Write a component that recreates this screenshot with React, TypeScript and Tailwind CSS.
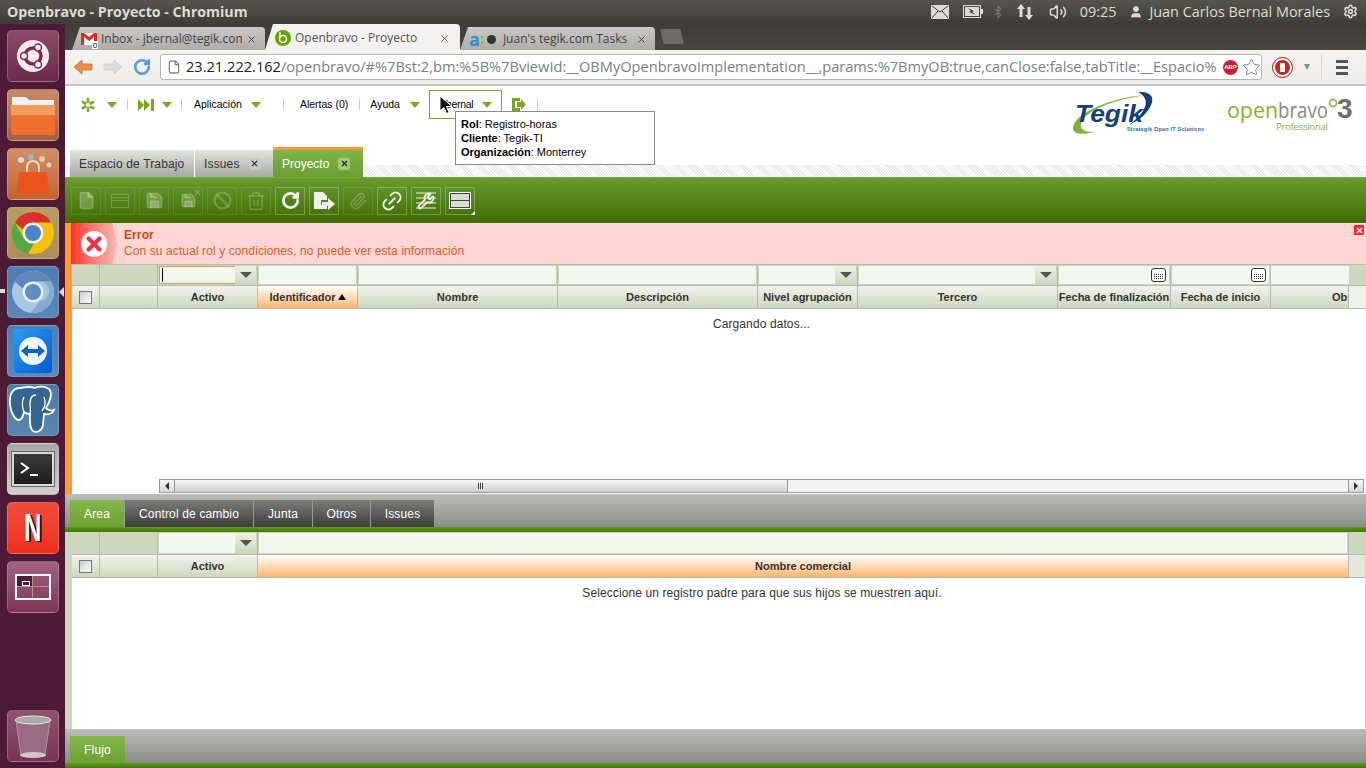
import { ReactNode } from "react";
import { Ban, Bluetooth, File, Link2, Paperclip, RotateCw, Save, Settings, Star, Trash2, User, Volume2, Wrench, X } from "lucide-react";

const arial = { fontFamily: '"Liberation Sans", Arial, sans-serif' };
const ui = { fontFamily: '"Open Sans", "Noto Sans", sans-serif' };

function DockTile({ className, children }: { className: string; children: ReactNode }) {
    return (
        <div className={`w-[52px] h-[52px] rounded-[5px] border border-white/20 flex items-center justify-center overflow-hidden shrink-0 ${className}`}>
            {children}
        </div>
    );
}

function Launcher() {
    return (
        <div className="w-[65px] shrink-0 bg-[#4d1b35] flex flex-col items-center gap-[7px] pt-[6px] pb-[6px] relative">
            <DockTile className="bg-gradient-to-b from-[#8b4a68] to-[#6d2a4b]">
                <svg width="36" height="36" viewBox="0 0 36 36">
                    <circle cx="18" cy="18" r="16" fill="#f3e9ee" />
                    <circle cx="18" cy="18" r="8" fill="none" stroke="#76304f" strokeWidth="3.5" />
                    <circle cx="9" cy="18" r="3.5" fill="#f3e9ee" stroke="#76304f" strokeWidth="1.5" />
                    <circle cx="23" cy="9.5" r="3.5" fill="#f3e9ee" stroke="#76304f" strokeWidth="1.5" />
                    <circle cx="23" cy="26.5" r="3.5" fill="#f3e9ee" stroke="#76304f" strokeWidth="1.5" />
                </svg>
            </DockTile>
            <DockTile className="bg-gradient-to-b from-[#c78a68] to-[#a8603c]">
                <svg width="46" height="44" viewBox="0 0 46 44">
                    <path d="M2 4h14l3 3h25v8H2z" fill="#f4f1ec" />
                    <path d="M1 12h44v28a2 2 0 0 1-2 2H3a2 2 0 0 1-2-2z" fill="#ee6f2e" />
                    <path d="M1 12h44v10H1z" fill="#f79a5e" />
                </svg>
            </DockTile>
            <DockTile className="bg-gradient-to-b from-[#cf8f66] to-[#c4612f]">
                <svg width="44" height="44" viewBox="0 0 44 44">
                    <circle cx="10" cy="8" r="3" fill="#e8d9c8" />
                    <circle cx="20" cy="5" r="3" fill="#9fb7cc" />
                    <circle cx="31" cy="7" r="3" fill="#e6c9a0" />
                    <circle cx="38" cy="13" r="2.5" fill="#d8d0c8" />
                    <path d="M8 20h28l2 22H6z" fill="#e8541c" />
                    <path d="M16 20v-5a6 6 0 0 1 12 0v5" fill="none" stroke="#f4d9c4" strokeWidth="2" />
                </svg>
            </DockTile>
            <DockTile className="bg-gradient-to-b from-[#b79c67] to-[#ab8f58]">
                <svg width="44" height="44" viewBox="0 0 44 44">
                    <circle cx="22" cy="22" r="21" fill="#f4c20d" />
                    <path d="M22 1a21 21 0 0 1 18.2 10.5H22a10.5 10.5 0 0 0-10 7.3L3.8 11.5A21 21 0 0 1 22 1z" fill="#d9302a" />
                    <path d="M3.800 11.500L14 29a10 10 0 0 0 9 3.400L17 43A21 21 0 0 1 3.800 11.500z" fill="#54a845" />
                    <circle cx="22" cy="22" r="10.500" fill="#f4f4f4" />
                    <circle cx="22" cy="22" r="8" fill="#4a86c8" />
                </svg>
            </DockTile>
            <DockTile className="bg-gradient-to-b from-[#4f7db0] to-[#5887b8]">
                <svg width="44" height="44" viewBox="0 0 44 44">
                    <circle cx="22" cy="22" r="21" fill="#a9c7e2" />
                    <path d="M22 1a21 21 0 0 1 18.2 10.5H22a10.500 10.500 0 0 0-10 7.300L3.800 11.500A21 21 0 0 1 22 1z" fill="#5d8abb" />
                    <path d="M40.200 11.500A21 21 0 0 1 20 43l9-12a10 10 0 0 0 2-19.500z" fill="#85aad0" />
                    <circle cx="22" cy="22" r="10.500" fill="#e9f0f7" />
                    <circle cx="22" cy="22" r="8" fill="#5b8fcb" />
                </svg>
            </DockTile>
            <DockTile className="bg-gradient-to-b from-[#4c80b8] to-[#5a8abc]">
                <div className="w-[38px] h-[44px] rounded-[3px] bg-gradient-to-br from-[#2e9bf2] to-[#0a58d0] flex items-center justify-center">
                    <svg width="30" height="30" viewBox="0 0 30 30">
                        <circle cx="15" cy="15" r="14" fill="#eef6fd" />
                        <path d="M3 15l7-6v4h10V9l7 6-7 6v-4H10v4z" fill="#0e62c8" />
                    </svg>
                </div>
            </DockTile>
            <DockTile className="bg-gradient-to-b from-[#4e7aa6] to-[#5a85ad]">
                <svg width="50" height="50" viewBox="0 0 50 50">
                    <path d="M12 3C4 3 1 10 2 20c1 8 5 15 9 15 3 0 4-4 5-8 2 2 4 2 6 2 0 7-1 14 3 17 4 2 9 0 10-6l1-11c5 1 9-1 10-4-3 1-7 0-8-2 4-6 7-15 3-19-4-3-10-3-14-1-5-2-10-1-15 0z" fill="#336791" stroke="#fff" strokeWidth="1.800" />
                    <path d="M16 12c-2 4-2 10 0 15M28 10c-4 0-6 4-6 9 0 4 1 7 0 10M36 12c2 5 1 10-2 14" fill="none" stroke="#fff" strokeWidth="1.300" />
                </svg>
            </DockTile>
            <DockTile className="bg-gradient-to-b from-[#a8a8a8] to-[#cfcfcf]">
                <div className="w-[42px] h-[34px] bg-gradient-to-b from-[#3a3a3a] to-[#1e1e1e] border-2 border-[#d8d8d8] flex items-center pl-[6px] gap-[2px] outline outline-1 outline-[#666]">
                    <svg width="24" height="16" viewBox="0 0 24 16">
                        <path d="M1 2l7 5-7 5" fill="none" stroke="#fff" strokeWidth="2" />
                        <path d="M10 14h8" stroke="#fff" strokeWidth="2" />
                    </svg>
                </div>
            </DockTile>
            <DockTile className="bg-gradient-to-b from-[#f04d3c] to-[#ee2d1d]">
                <span className="text-[38px] font-bold text-white leading-none scale-x-[0.62] [text-shadow:3px_1px_0_#111]" style={arial}>N</span>
            </DockTile>
            <DockTile className="bg-gradient-to-b from-[#a26382] to-[#7c3656]">
                <div className="w-[36px] h-[26px] border-2 border-white grid grid-cols-2 grid-rows-2">
                    <div className="bg-[#4d1b35] border-r border-b border-[#a99] flex items-center justify-center">
                        <div className="w-[8px] h-[5px] border border-white ml-1 mt-1" />
                    </div>
                    <div className="border-b border-[#a99]" />
                    <div className="border-r border-[#a99]" />
                    <div />
                </div>
            </DockTile>
            <div className="mt-auto">
                <DockTile className="bg-gradient-to-b from-[#8e5371] to-[#7a3454]">
                    <svg width="40" height="46" viewBox="0 0 40 46">
                        <path d="M3 8h34l-5 34c-1 3-23 3-24 0z" fill="#9a6c82" stroke="#b8a0ac" strokeWidth="0.800" />
                        <ellipse cx="20" cy="7" rx="18" ry="4" fill="#a9a9a9" stroke="#e4e4e4" />
                        <ellipse cx="20" cy="42" rx="13" ry="3" fill="#c9c9c9" />
                    </svg>
                </DockTile>
            </div>
            <span className="absolute left-0 top-[265px] w-[5px] h-[4px] bg-[#ddd]" />
            <span className="absolute right-[1px] top-[263px] w-0 h-0 border-y-[5px] border-y-transparent border-r-[5px] border-r-[#ddd]" />
        </div>
    );
}

function TitleBar() {
    return (
        <div className="h-[24px] shrink-0 bg-gradient-to-b from-[#55544e] to-[#3d3c37] flex items-center pl-[7px] pr-[8px] text-[#dfdbd2]" style={ui}>
            <span className="text-[14.200px] font-bold">Openbravo - Proyecto - Chromium</span>
            <div className="ml-auto flex items-center text-[14.400px]">
                <svg width="18" height="14" viewBox="0 0 18 14" className="mr-[14px]">
                    <rect width="18" height="14" rx="1" fill="#dfdbd2" />
                    <path d="M1 1l8 6 8-6M1 13l6-7M17 13l-6-7" fill="none" stroke="#3d3c37" strokeWidth="1" />
                </svg>
                <svg width="20" height="13" viewBox="0 0 20 13" className="mr-[10px]">
                    <rect x="0.500" y="0.500" width="17" height="12" fill="none" stroke="#dfdbd2" />
                    <rect x="2" y="2" width="14" height="9" fill="#dfdbd2" />
                    <rect x="18" y="4" width="2" height="5" fill="#dfdbd2" />
                    <path d="M5 3l6 3-2 1 4 3-7-3 2-1z" fill="#3d3c37" />
                </svg>
                <Bluetooth size={14} className="mr-[11px] -ml-[2px] text-[#77756f]" />
                <svg width="18" height="18" viewBox="0 0 18 18" className="mr-[15px]">
                    <path d="M5 1l4 5H6.500v8h-3V6H1zM13 17l4-5h-2.500V4h-3v8H9z" fill="#dfdbd2" />
                </svg>
                <Volume2 size={18} className="mr-[13px]" />
                <span className="mr-[13px]">09:25</span>
                <User size={14} fill="currentColor" className="mr-[6px]" />
                <span className="mr-[13px]">Juan Carlos Bernal Morales</span>
                <Settings size={15} strokeWidth={2.500} />
            </div>
        </div>
    );
}

function BrowserTabs() {
    return (
        <div className="h-[26px] shrink-0 bg-gradient-to-b from-[#3e3d38] to-[#47463f] flex items-end pl-[7px] text-[12px]" style={ui}>
            <div className="w-[193px] h-[23px] bg-gradient-to-b from-[#c9c8c4] to-[#aeada9] rounded-t-[4px] [clip-path:polygon(0_100%,8px_0,100%_0,100%_100%)] flex items-center pl-[9px] pr-[8px] pt-[1px] text-[#444] relative">
                <svg width="16" height="14" viewBox="0 0 16 14" className="shrink-0">
                    <rect x="0" y="1" width="16" height="12" fill="#fff" />
                    <path d="M0 1h3l5 4 5-4h3v12h-3V5L8 9 3 5v8H0z" fill="#d93025" />
                </svg>
                <span className="absolute left-[20px] bottom-[1px] w-[6px] h-[8px] bg-white text-black text-[8px] leading-[8px] text-center">0</span>
                <span className="ml-[4px] overflow-hidden whitespace-nowrap flex-1">Inbox - jbernal@tegik.com</span>
                <X size={11} className="ml-[4px]" />
            </div>
            <div className="w-[195px] h-[26px] bg-[#f2f1f0] rounded-t-[4px] [clip-path:polygon(0_100%,8px_0,100%_0,100%_100%)] flex items-center pl-[10px] pr-[10px] pt-[2px] text-[#555]">
                <svg width="16" height="16" viewBox="0 0 16 16" className="shrink-0">
                    <circle cx="8" cy="8" r="8" fill="#5fa800" />
                    <circle cx="8" cy="9" r="3.500" fill="none" stroke="#fff" strokeWidth="1.500" />
                    <path d="M5 2v6" stroke="#fff" strokeWidth="1.500" />
                </svg>
                <span className="ml-[4px] flex-1">Openbravo - Proyecto</span>
                <X size={11} />
            </div>
            <div className="w-[195px] h-[23px] bg-gradient-to-b from-[#c9c8c4] to-[#aeada9] rounded-t-[4px] [clip-path:polygon(0_100%,8px_0,100%_0,100%_100%)] flex items-center pl-[9px] pr-[8px] pt-[1px] text-[#444]">
                <span className="text-[#2d8fd5] font-bold text-[18px] leading-none">a</span>
                <span className="text-[#7db53a] font-bold text-[14px] leading-none">:</span>
                <span className="ml-[3px] w-[9px] h-[9px] rounded-full bg-[#333] shrink-0" />
                <span className="ml-[7px] overflow-hidden whitespace-nowrap flex-1">Juan's tegik.com Tasks</span>
                <X size={11} className="ml-[4px]" />
            </div>
            <div className="w-[24px] h-[15px] ml-[5px] mb-[6px] rounded-[3px] bg-[#6c6b66] [clip-path:polygon(0_0,85%_0,100%_100%,15%_100%)]" />
        </div>
    );
}

function AddressBar() {
    return (
        <div className="h-[36px] shrink-0 bg-gradient-to-b from-[#f4f3f2] to-[#eeedec] border-b-2 border-[#c4c4c2] flex items-center pl-[8px] pr-[10px]" style={ui}>
            <svg width="20" height="16" viewBox="0 0 20 16" className="mr-[10px]">
                <path d="M1 8l8-7v4h10v6H9v4z" fill="#ef8c4c" stroke="#c96a30" strokeWidth="0.800" />
            </svg>
            <svg width="20" height="16" viewBox="0 0 20 16" className="mr-[10px]">
                <path d="M19 8l-8-7v4H1v6h10v4z" fill="#dcdcdc" stroke="#cfcfcf" strokeWidth="0.800" />
            </svg>
            <RotateCw size={18} strokeWidth={3.500} className="text-[#5b9bd8] mr-[9px]" />
            <div className="w-[1102px] h-[26px] bg-white border border-[#b5b5b3] rounded-[3px] flex items-center pl-[6px] pr-[0px] overflow-hidden">
                <File size={14} className="text-[#777] shrink-0" />
                <span className="ml-[5px] text-[14.600px] whitespace-nowrap overflow-hidden flex-1 text-[#777f86]">
                    <span className="text-[#222]">23.21.222.162</span>/openbravo/#%7Bst:2,bm:%5B%7BviewId:__OBMyOpenbravoImplementation__,params:%7BmyOB:true,canClose:false,tabTitle:__Espacio%
                </span>
                <span className="w-[15px] h-[15px] rounded-full bg-[#c8202c] text-white text-[6px] font-bold flex items-center justify-center shrink-0 mr-[4px]" style={arial}>ABP</span>
                <Star size={19} strokeWidth={1} className="text-[#666] shrink-0" />
            </div>
            <div className="ml-[11px] w-[19px] h-[19px] rounded-full bg-[#d3241b] border-2 border-[#fff] outline outline-1 outline-[#a01510] flex items-center justify-center">
                <span className="w-[5px] h-[9px] bg-white rounded-[1px]" />
            </div>
            <span className="ml-[12px] w-0 h-0 border-x-[3.500px] border-x-transparent border-t-[6px] border-t-[#888]" />
            <span className="ml-[11px] h-[26px] border-l border-[#d8d8d6]" />
            <div className="ml-[14px] flex flex-col gap-[3px]">
                <span className="w-[12px] h-[3px] bg-[#555]" />
                <span className="w-[12px] h-[3px] bg-[#555]" />
                <span className="w-[12px] h-[3px] bg-[#555]" />
            </div>
        </div>
    );
}

function Caret({ className = "" }: { className?: string }) {
    return <span className={`w-0 h-0 border-x-[5px] border-x-transparent border-t-[6px] border-t-[#75a81e] ${className}`} />;
}

function Sep({ className = "" }: { className?: string }) {
    return <span className={`h-[11px] border-l border-[#c8c8c8] ${className}`} />;
}

function Menu() {
    return (
        <div className="h-[36px] pt-[1px] pl-[14px] flex items-center text-[10.500px] text-black" style={arial}>
            <svg width="16" height="16" viewBox="0 0 16 16" className="ml-[1px]">
                <g stroke="#7bae2a" strokeWidth="2.600" strokeLinecap="round">
                    <path d="M8 2v12M2.800 5l10.400 6M2.800 11l10.400-6" />
                </g>
                <circle cx="8" cy="8" r="2" fill="#fff" />
            </svg>
            <Caret className="ml-[11px]" />
            <Sep className="ml-[10px]" />
            <svg width="16" height="12" viewBox="0 0 16 12" className="ml-[10px]">
                <path d="M0 0l6 6-6 6zM6 0l6 6-6 6zM13 0h3v12h-3z" fill="#75a81e" />
            </svg>
            <Caret className="ml-[8px]" />
            <Sep className="ml-[9px]" />
            <span className="ml-[12px]">Aplicación</span>
            <Caret className="ml-[9px]" />
            <Sep className="ml-[22px]" />
            <span className="ml-[16px]">Alertas (0)</span>
            <Sep className="ml-[11px]" />
            <span className="ml-[10px]">Ayuda</span>
            <Caret className="ml-[10px]" />
            <div className="ml-[9px] w-[73px] h-[29px] border border-[#75a81e] flex items-center pl-[11px] bg-white">
                <span className="tracking-[-0.300px]">Jbernal</span>
                <Caret className="ml-[9px]" />
            </div>
            <svg width="14" height="13" viewBox="0 0 14 13" className="ml-[10px]">
                <path d="M0 0h8v3H3v7h5v3H0z" fill="#75a81e" />
                <path d="M5 4h4V1l5 5.500L9 12V9H5z" fill="#75a81e" />
            </svg>
            <Sep className="ml-[11px]" />
        </div>
    );
}

function Logos() {
    return (
        <div className="absolute left-[1005px] top-[5px]">
            <svg width="296" height="50" viewBox="0 0 296 50">
                <path d="M80 4C50 4 6 20 3 36c-1 8 11 8 21 5-10 0-16-3-12-11C20 16 55 6 80 4z" fill="#7db53a" />
                <path d="M68 1c12-1 18 5 12 15-4 8-12 14-20 17 10-7 20-19 14-27-2-3-4-4-6-5z" fill="#123f78" />
                <text x="5" y="31" fontFamily="Liberation Sans" fontWeight="bold" fontStyle="italic" fontSize="24" fill="#123f78" textLength="68" lengthAdjust="spacingAndGlyphs">Tegik</text>
                <text x="57" y="40" fontFamily="Liberation Sans" fontSize="5.500" fontWeight="bold" fill="#2b6aa0" textLength="77">Strategik Open IT Solutions</text>
                <text x="157" y="27" fontFamily="Open Sans" fontSize="22" fill="#7cb82f" textLength="51" lengthAdjust="spacingAndGlyphs">open</text>
                <text x="208" y="27" fontFamily="Open Sans" fontSize="22" fill="#888" textLength="50" lengthAdjust="spacingAndGlyphs">bravo</text>
                <text x="267" y="27" fontFamily="Liberation Sans" fontWeight="bold" fontSize="28" fill="#6d6d6d">3</text>
                <circle cx="263" cy="12" r="3.500" fill="none" stroke="#7cb82f" strokeWidth="1.500" />
                <text x="206" y="39" fontFamily="Open Sans" fontSize="9.500" fill="#7cb82f" textLength="52">Professional</text>
            </svg>
        </div>
    );
}

function WindowTabs() {
    return (
        <div className="h-[30px] mt-[25px] flex items-end pl-[5px] text-[12px] bg-[repeating-linear-gradient(45deg,#ffffff_0,#ffffff_1px,#e8e8e8_1px,#e8e8e8_2px)] bg-[length:100%_12px] bg-bottom bg-no-repeat" style={arial}>
            <div className="w-[125px] h-[27px] bg-gradient-to-b from-[#e3e4e0] to-[#a7aba3] flex items-center pl-[9px] text-[#333] border-r border-white tracking-[0.150px]">
                Espacio de Trabajo
            </div>
            <div className="w-[78px] h-[27px] bg-gradient-to-b from-[#e3e4e0] to-[#a7aba3] flex items-center pl-[9px] text-[#333] tracking-[0.150px]">
                Issues
                <span className="ml-[9px] w-[12px] h-[12px] rounded-[3px] bg-[#c9cac5] flex items-center justify-center"><X size={9} strokeWidth={3} /></span>
            </div>
            <div className="w-[90px] h-[30px] bg-gradient-to-b from-[#82b548] to-[#6b9e32] border-t-[3px] border-[#ff9933] flex items-center pl-[9px] text-white">
                Proyecto
                <span className="ml-[9px] w-[12px] h-[12px] rounded-[3px] bg-[#a4c77c] flex items-center justify-center text-[#222]"><X size={9} strokeWidth={3} /></span>
            </div>
        </div>
    );
}

function ToolButton({ on = false, children }: { on?: boolean; children: ReactNode }) {
    return (
        <div className={`relative w-[30px] h-[28px] border rounded-[1px] flex items-center justify-center ${on ? "border-white/25 text-[#f0f0ea]" : "border-white/10 text-white/20"}`}>
            {children}
        </div>
    );
}

function Toolbar() {
    return (
        <div className="h-[46px] shrink-0 bg-gradient-to-b from-[#6a9c2f] to-[#3f6b00] border-t border-[#76a83a] flex items-center gap-[4px] pl-[6px]">
            <ToolButton><File size={19} fill="currentColor" /></ToolButton>
            <ToolButton>
                <div className="w-[18px] h-[14px] border border-current rounded-[1px] flex flex-col gap-[2px] pt-[2px]">
                    <span className="h-[1px] bg-current" />
                    <span className="h-[1px] bg-current" />
                </div>
            </ToolButton>
            <ToolButton><Save size={19} fill="currentColor" /></ToolButton>
            <ToolButton>
                <Save size={17} fill="currentColor" />
                <X size={9} strokeWidth={4} className="absolute top-0 right-0" />
            </ToolButton>
            <ToolButton><Ban size={19} strokeWidth={3} /></ToolButton>
            <ToolButton><Trash2 size={20} /></ToolButton>
            <ToolButton on><RotateCw size={19} strokeWidth={3.500} /></ToolButton>
            <ToolButton on>
                <svg width="22" height="18" viewBox="0 0 22 18">
                    <path d="M1 0h9l4 4v4H8v5h6v4H1z" fill="currentColor" />
                    <path d="M9 10h6V6l7 6-7 6v-4H9z" fill="currentColor" />
                </svg>
            </ToolButton>
            <ToolButton><Paperclip size={18} strokeWidth={2.500} /></ToolButton>
            <ToolButton on><Link2 size={24} className="-rotate-45" /></ToolButton>
            <ToolButton on>
                <div className="absolute left-[4px] top-[4px] flex flex-col gap-[3px]">
                    <span className="block w-[20px] h-[2px] bg-current opacity-50" />
                    <span className="block w-[20px] h-[2px] bg-current opacity-50" />
                    <span className="block w-[20px] h-[2px] bg-current opacity-50" />
                    <span className="block w-[20px] h-[2px] bg-current opacity-50" />
                </div>
                <Wrench size={18} strokeWidth={2.500} className="relative" />
            </ToolButton>
            <ToolButton on>
                <div className="w-[20px] h-[15px] border border-[#444] outline outline-1 outline-white bg-[#d8ddd2] flex flex-col justify-center">
                    <span className="block h-[1px] bg-[#444]" />
                </div>
                <span className="absolute -right-[1px] -bottom-[1px] w-0 h-0 border-l-[4px] border-l-transparent border-b-[4px] border-b-white" />
            </ToolButton>
        </div>
    );
}

function ErrorBox() {
    return (
        <div className="h-[41px] shrink-0 bg-[#ffd5d5] flex relative border-l-[6px] border-[#ff9933]" style={arial}>
            <div className="w-[46px] bg-gradient-to-r from-[#ff2a2a] to-[#ffb5b5] [clip-path:polygon(0_0,90%_0,100%_50%,90%_100%,0_100%)] flex items-center justify-center pr-[1px]">
                <div className="w-[26px] h-[26px] rounded-full bg-white flex items-center justify-center">
                    <X size={22} strokeWidth={4.500} className="text-[#ee3340]" />
                </div>
            </div>
            <div className="pl-[7px] pt-[4px] text-[12px] leading-[16px] text-[#d8601a] tracking-[0.100px]">
                <div className="font-bold text-[#c84a10]">Error</div>
                <div>Con su actual rol y condiciones, no puede ver esta información</div>
            </div>
            <div className="absolute right-[2px] top-[2px] w-[10px] h-[10px] bg-[#ff2030] rounded-[1px] flex items-center justify-center">
                <X size={9} strokeWidth={4} className="text-white" />
            </div>
        </div>
    );
}

function ComboButton() {
    return (
        <span className="w-[21px] h-full bg-gradient-to-b from-[#eef1e8] to-[#cdd6bb] flex items-center justify-center shrink-0">
            <span className="w-0 h-0 border-x-[6px] border-x-transparent border-t-[6px] border-t-[#555]" />
        </span>
    );
}

function DateButton() {
    return (
        <span className="w-[21px] h-full bg-[#f4f7ef] flex items-center justify-center shrink-0">
            <span className="w-[15px] h-[14px] rounded-[3px] border border-[#333] bg-white flex flex-col items-center justify-end gap-[1px] pb-[2px]">
                <span className="w-[9px] h-[1px] bg-[repeating-linear-gradient(90deg,#333333_0,#333333_1px,#ffffff_1px,#ffffff_2px)]" />
                <span className="w-[9px] h-[1px] bg-[repeating-linear-gradient(90deg,#333333_0,#333333_1px,#ffffff_1px,#ffffff_2px)]" />
                <span className="w-[9px] h-[1px] bg-[repeating-linear-gradient(90deg,#333333_0,#333333_1px,#ffffff_1px,#ffffff_2px)]" />
            </span>
        </span>
    );
}

function FilterCell({ kind, focus = false }: { kind?: "combo" | "date"; focus?: boolean }) {
    return (
        <div className="border-r border-[#b5bcae] p-[1px] flex">
            <div className={`flex-1 bg-[#f4f7ef] flex items-center ${focus ? "border border-[#f09a3e] border-r-0" : ""}`}>
                {focus && <span className="ml-[2px] w-[1px] h-[14px] bg-black" />}
            </div>
            {kind === "combo" && <ComboButton />}
            {kind === "date" && <DateButton />}
        </div>
    );
}

function HeadCell({ label, sorted = false, clip = false }: { label?: string; sorted?: boolean; clip?: boolean }) {
    const tone = sorted ? "from-white to-[#ffb56a]" : "from-[#f3f3ef] to-[#ced7bd]";
    return (
        <div className={`bg-gradient-to-b ${tone} border-r border-[#b5bcae] flex items-center overflow-hidden whitespace-nowrap text-[11px] font-bold text-[#333] ${clip ? "pl-[61px]" : "justify-center"}`}>
            {label}
            {sorted && label && <span className="ml-[2px] w-0 h-0 border-x-[4px] border-x-transparent border-b-[6px] border-b-black" />}
        </div>
    );
}

function CheckCell() {
    return (
        <div className="bg-gradient-to-b from-[#f3f3ef] to-[#ced7bd] border-r border-[#b5bcae] flex items-center justify-center">
            <span className="w-[13px] h-[13px] border border-[#777] bg-gradient-to-br from-[#c9ced6] to-white" />
        </div>
    );
}

function ProjectGrid() {
    return (
        <div className="flex flex-1 min-h-0 bg-white text-[#333]" style={arial}>
            <div className="flex-1 min-w-0 flex flex-col border-l-[7px] border-[#ff9933] relative">
                <div className="h-[22px] shrink-0 bg-[#ced7bd] border-y border-[#b5bcae] grid grid-cols-[28px_58px_100px_100px_200px_200px_100px_200px_113px_100px_78px_17px]">
                    <div className="border-r border-[#b5bcae]" />
                    <div className="border-r border-[#b5bcae]" />
                    <FilterCell kind="combo" focus />
                    <FilterCell />
                    <FilterCell />
                    <FilterCell />
                    <FilterCell kind="combo" />
                    <FilterCell kind="combo" />
                    <FilterCell kind="date" />
                    <FilterCell kind="date" />
                    <div className="bg-[#f4f7ef] my-[1px]" />
                    <div />
                </div>
                <div className="h-[23px] shrink-0 border-b border-[#b5bcae] grid grid-cols-[28px_58px_100px_100px_200px_200px_100px_200px_113px_100px_78px_17px]">
                    <CheckCell />
                    <HeadCell />
                    <HeadCell label="Activo" />
                    <HeadCell label="Identificador" sorted />
                    <HeadCell label="Nombre" />
                    <HeadCell label="Descripción" />
                    <HeadCell label="Nivel agrupación" />
                    <HeadCell label="Tercero" />
                    <HeadCell label="Fecha de finalización" />
                    <HeadCell label="Fecha de inicio" />
                    <HeadCell label="Observaciones" clip />
                    <div className="bg-[#eef0ea]" />
                </div>
                <div className="flex-1 min-h-0 flex flex-col">
                    <div className="pt-[8px] pl-[85px] text-[12px] text-center leading-[14px] tracking-[0.100px]">Cargando datos...</div>
                    <div className="mt-auto mb-[1px] ml-[87px] mr-[2px] h-[14px] border border-[#999] flex bg-[#f2f2f2]">
                        <div className="w-[15px] border-r border-[#999] bg-gradient-to-b from-[#f7f7f7] to-[#d8d8d8] flex items-center justify-center">
                            <span className="w-0 h-0 border-y-[4px] border-y-transparent border-r-[4px] border-r-[#333]" />
                        </div>
                        <div className="w-[613px] pr-[2px] border-r border-[#999] bg-gradient-to-b from-[#f7f7f7] to-[#cfcfcf] flex items-center justify-center gap-[1px]">
                            <span className="w-[1px] h-[6px] bg-[#444]" />
                            <span className="w-[1px] h-[6px] bg-[#444]" />
                            <span className="w-[1px] h-[6px] bg-[#444]" />
                        </div>
                        <div className="flex-1" />
                        <div className="w-[15px] border-l border-[#999] bg-gradient-to-b from-[#f7f7f7] to-[#d8d8d8] flex items-center justify-center">
                            <span className="w-0 h-0 border-y-[4px] border-y-transparent border-l-[4px] border-l-[#333]" />
                        </div>
                    </div>
                </div>
            </div>
        </div>
    );
}

function LowerTab({ active = false, className, label }: { active?: boolean; className: string; label: string }) {
    return (
        <div className={`h-[27px] pt-[1px] flex items-center justify-center text-[12px] tracking-[0.150px] text-white border-r border-[#999] ${active ? "bg-gradient-to-b from-[#85b84c] to-[#6ca030]" : "bg-gradient-to-b from-[#7c7c7a] to-[#3f3f3d]"} ${className}`}>
            {label}
        </div>
    );
}

function LowerTabs() {
    return (
        <div className="h-[33px] shrink-0 bg-gradient-to-b from-[#bcbcba] to-[#8c8c8a] flex items-end pl-[5px]" style={arial}>
            <LowerTab active label="Area" className="w-[55px]" />
            <LowerTab label="Control de cambio" className="w-[129px]" />
            <LowerTab label="Junta" className="w-[59px]" />
            <LowerTab label="Otros" className="w-[58px]" />
            <LowerTab label="Issues" className="w-[63px] border-r-0" />
        </div>
    );
}

function GreenLine() {
    return <div className="h-[5px] shrink-0 bg-gradient-to-b from-[#5f9a20] to-[#3f7a00]" />;
}

function ChildGrid() {
    return (
        <div className="h-[197px] shrink-0 flex flex-col bg-white border-l-[7px] border-r border-[#ced7bd] text-[#333]" style={arial}>
            <div className="h-[23px] shrink-0 bg-[#ced7bd] border-b border-[#b5bcae] grid grid-cols-[28px_58px_100px_1091px_16px]">
                <div className="border-r border-[#b5bcae]" />
                <div className="border-r border-[#b5bcae]" />
                <FilterCell kind="combo" />
                <FilterCell />
                <div />
            </div>
            <div className="h-[23px] shrink-0 border-b border-[#b5bcae] grid grid-cols-[28px_58px_100px_1091px_16px]">
                <CheckCell />
                <HeadCell />
                <HeadCell label="Activo" />
                <div className="bg-gradient-to-b from-white to-[#ffb56a] border-r border-[#b5bcae] flex items-center justify-center text-[11px] font-bold">Nombre comercial</div>
                <div className="bg-[#e4e8dc]" />
            </div>
            <div className="pt-[8px] pl-[87px] text-[12px] leading-[14px] text-center tracking-[0.100px]">Seleccione un registro padre para que sus hijos se muestren aquí.</div>
        </div>
    );
}

function FlowStrip() {
    return (
        <div className="h-[34px] shrink-0 bg-gradient-to-b from-[#bcbcba] to-[#8c8c8a] flex items-end pl-[5px]" style={arial}>
            <LowerTab active label="Flujo" className="w-[55px] border-r-0" />
        </div>
    );
}

export default function App() {
    return (
        <div className="w-[1366px] h-[768px] overflow-hidden flex flex-col bg-white relative">
            <TitleBar />
            <div className="flex flex-1 min-h-0">
                <Launcher />
                <div className="flex-1 min-w-0 flex flex-col">
                    <BrowserTabs />
                    <AddressBar />
                    <div className="flex-1 min-h-0 flex flex-col relative">
                        <Menu />
                        <Logos />
                        <WindowTabs />
                        <Toolbar />
                        <ErrorBox />
                        <ProjectGrid />
                        <LowerTabs />
                        <GreenLine />
                        <ChildGrid />
                        <FlowStrip />
                        <GreenLine />
                    </div>
                </div>
            </div>
            <div className="absolute left-[455px] top-[111px] w-[200px] h-[54px] bg-white border border-[#888] pl-[5px] pt-[5px] text-[11px] leading-[14px] text-black" style={arial}>
                <div><b>Rol</b>: Registro-horas</div>
                <div><b>Cliente</b>: Tegik-TI</div>
                <div><b>Organización</b>: Monterrey</div>
            </div>
            <svg width="14" height="20" viewBox="0 0 14 20" className="absolute left-[439px] top-[95px]">
                <path d="M1 1v15l4-3.500 2.500 6 2.500-1-2.500-6H13z" fill="#111" stroke="#fff" strokeWidth="1" />
            </svg>
        </div>
    );
}
